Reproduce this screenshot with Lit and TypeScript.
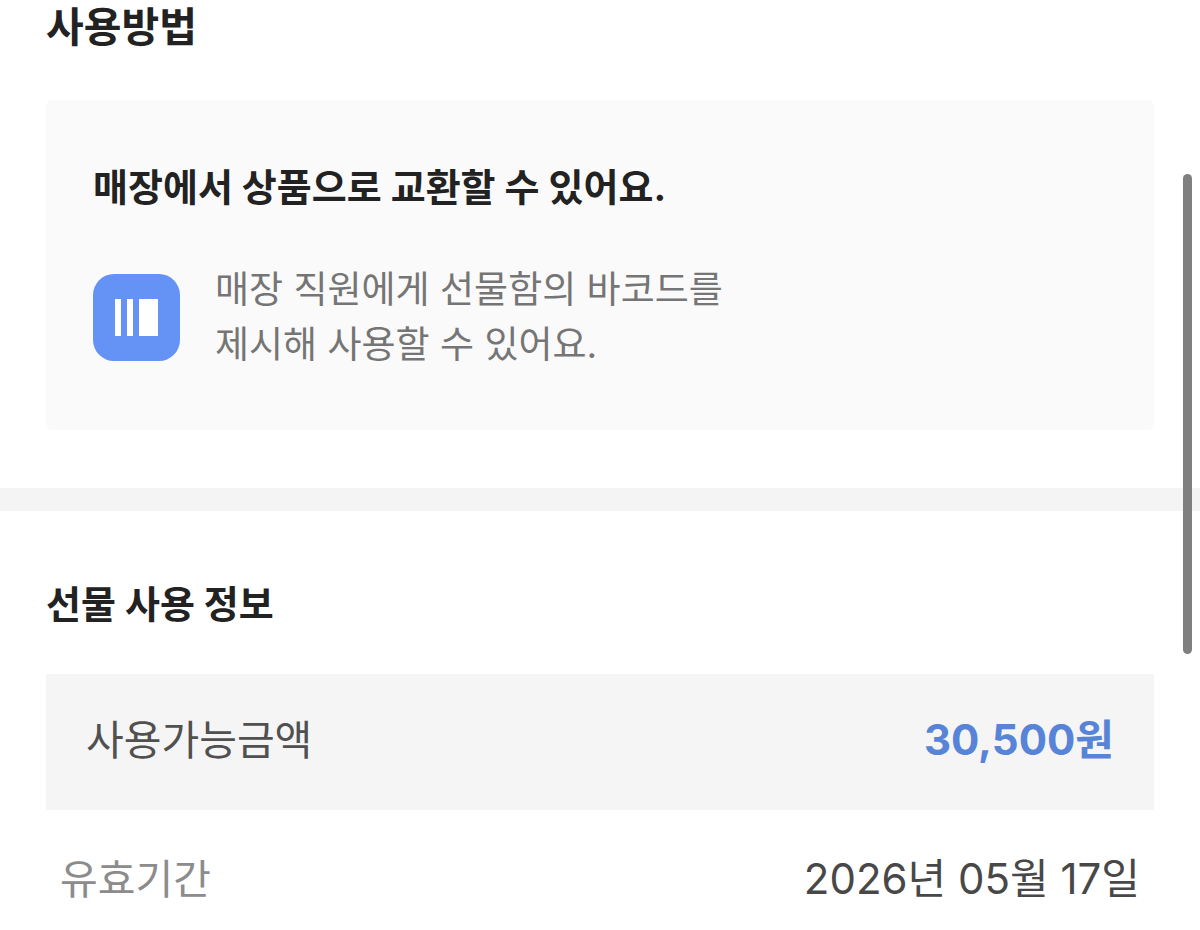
import { LitElement, html, css } from "lit";
import { customElement } from "lit/decorators.js";

@customElement("app-root")
export class AppRoot extends LitElement {
  static styles = css`
    :host {
      display: block;
      position: relative;
      min-height: 100vh;
      overflow: hidden;
      background: #fff;
      color: #222;
      font-family: Inter, "Noto Sans CJK KR", sans-serif;
    }
    h2, h3, p, dl, dt, dd { margin: 0; }
    section { padding: 0 46px; }
    h2, h3 { font-size: 38px; line-height: 56px; font-weight: 700; }
    .lead { font-size: 41px; line-height: 54px; }
    .card {
      margin: 46px 0 58px;
      padding: 59px 47px 58px;
      background: #fafafa;
      border-radius: 6px;
    }
    .guide { display: flex; align-items: center; gap: 35px; margin-top: 47px; }
    .guide svg { width: 87px; height: 87px; flex: none; }
    .guide p { font-size: 37px; line-height: 55px; color: #757575; }
    .divider { height: 23px; background: #f4f4f4; }
    .info { padding-top: 65px; }
    .row {
      display: flex;
      justify-content: space-between;
      align-items: center;
      padding: 0 14px;
      font-size: 41px;
      line-height: 56px;
    }
    .row dd { font-size: 42px; }
    .amount { margin: 42px 0 41px; padding: 38px 40px 42px; background: #f5f5f5; }
    .amount dt { color: #505050; }
    .amount dd { color: #5884d8; font-weight: 700; }
    .period dt { color: #8c8c8c; }
    .period dd { color: #484848; }
    .thumb {
      position: absolute;
      top: 174px;
      right: 8px;
      width: 9px;
      height: 480px;
      border-radius: 5px;
      background: #7f7f7f;
    }
  `;

  render() {
    return html`
      <section>
        <h2 class="lead">사용방법</h2>
        <div class="card">
          <h3>매장에서 상품으로 교환할 수 있어요.</h3>
          <div class="guide">
            <svg viewBox="0 0 87 87" aria-hidden="true">
              <rect width="87" height="87" rx="21" fill="#6492f5" />
              <path d="M22 25h6v37h-6zM34 25h6v37h-6zM46 25h19v37H46z" fill="#fff" />
            </svg>
            <p>매장 직원에게 선물함의 바코드를<br />제시해 사용할 수 있어요.</p>
          </div>
        </div>
      </section>
      <div class="divider"></div>
      <section class="info">
        <h2>선물 사용 정보</h2>
        <dl>
          <div class="row amount"><dt>사용가능금액</dt><dd>30,500원</dd></div>
          <div class="row period"><dt>유효기간</dt><dd>2026년 05월 17일</dd></div>
        </dl>
      </section>
      <div class="thumb"></div>
    `;
  }
}
